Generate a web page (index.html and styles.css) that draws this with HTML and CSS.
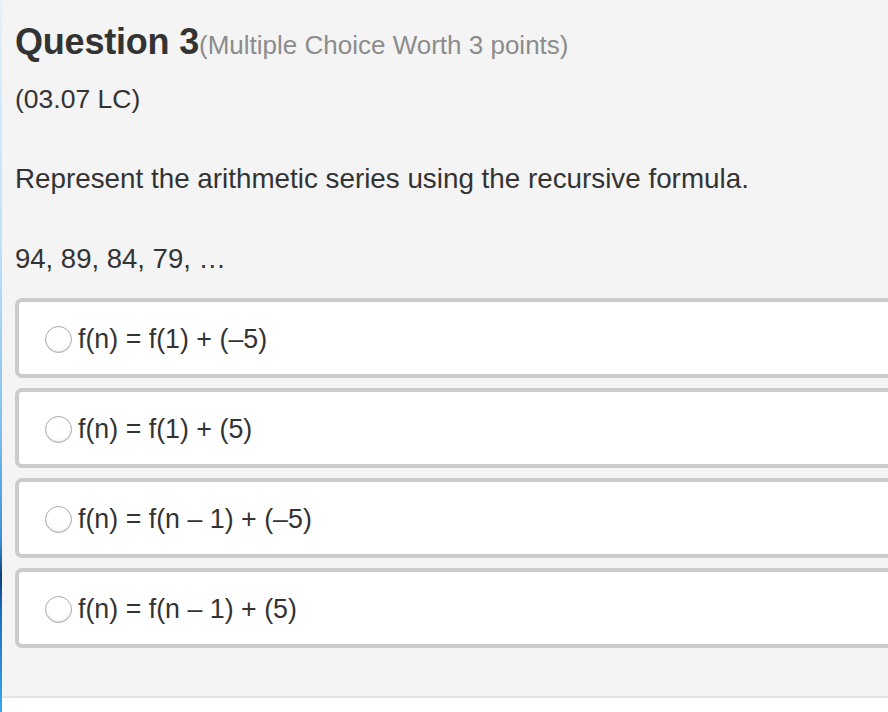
FILE: index.html
```html
<!DOCTYPE html>
<html lang="en">
<head>
<meta charset="utf-8">
<title>Question 3</title>
<link rel="stylesheet" href="styles.css">
</head>
<body>
<main class="page">
  <section class="question">
    <h1 class="q-title">Question 3<span class="q-meta">(Multiple Choice Worth 3 points)</span></h1>
    <p class="q-code">(03.07 LC)</p>
    <p class="q-prompt">Represent the arithmetic series using the recursive formula.</p>
    <p class="q-series">94, 89, 84, 79, …</p>
    <ul class="options">
      <li class="option"><span class="radio"></span><span class="opt-text">f(n) = f(1) + (–5)</span></li>
      <li class="option"><span class="radio"></span><span class="opt-text">f(n) = f(1) + (5)</span></li>
      <li class="option"><span class="radio"></span><span class="opt-text">f(n) = f(n – 1) + (–5)</span></li>
      <li class="option"><span class="radio"></span><span class="opt-text">f(n) = f(n – 1) + (5)</span></li>
    </ul>
  </section>
  <div class="footer"></div>
</main>
</body>
</html>
```
FILE: styles.css
```css
html {
  overflow: hidden;
  background: #ffffff;
}
body {
  margin: 0;
  font-family: "Liberation Sans", Arial, sans-serif;
  color: #333333;
}
.page {
  min-height: 712px;
  background:
    linear-gradient(to bottom, #e3f1fb 0%, #bfe0f7 35%, #7fc0ee 60%, #3a8fd6 76%, #0d3f7a 81%, #1d6cc4 86%, #3aa6ee 100%) left top / 2px 100% no-repeat,
    #ffffff;
  display: flex;
  flex-direction: column;
}
.question {
  background: #f4f4f4;
  padding: 20px 0 48px 13px;
  margin-left: 2px;
}
.q-title {
  margin: 0;
  font-size: 36px;
  line-height: 44px;
  font-weight: bold;
  color: #333333;
  letter-spacing: -0.2px;
}
.q-meta {
  font-size: 26px;
  font-weight: normal;
  color: #8c8c8c;
  letter-spacing: 0;
}
.q-code {
  margin: 17px 0 0;
  font-size: 26.5px;
  line-height: 30px;
}
.q-prompt {
  margin: 49px 0 0;
  font-size: 27.8px;
  line-height: 32px;
}
.q-series {
  margin: 48px 0 0;
  font-size: 27.5px;
  line-height: 32px;
}
.options {
  list-style: none;
  margin: 23px -30px 0 0;
  padding: 0;
  display: flex;
  flex-direction: column;
  gap: 10px;
}
.option {
  box-sizing: border-box;
  height: 80px;
  border: 4px solid #cbcbcb;
  border-radius: 7px;
  background: #ffffff;
  display: flex;
  align-items: center;
  padding: 2px 0 0 26px;
  gap: 6px;
}
.radio {
  box-sizing: border-box;
  width: 27px;
  height: 27px;
  border-radius: 50%;
  border: 1px solid #a9a9a9;
  background: radial-gradient(circle at 50% 35%, #ffffff 55%, #ececec 100%);
  box-shadow: inset 0 -1px 1px rgba(0,0,0,0.08);
  flex: none;
}
.opt-text {
  font-size: 26.8px;
  line-height: 32px;
  color: #333333;
}
.footer {
  margin-left: 2px;
  height: 2px;
  background: #e4e4e4;
}
```
